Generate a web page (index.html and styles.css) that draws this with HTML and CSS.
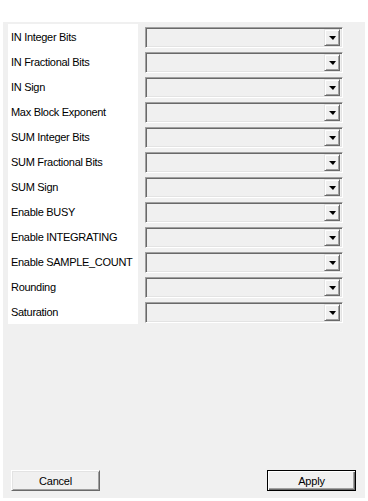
FILE: index.html
```html
<!DOCTYPE html>
<html>
<head>
<meta charset="utf-8">
<link rel="stylesheet" href="styles.css">
</head>
<body>
<div class="dialog">
  <div class="form">
    <div class="row"><div class="label">IN Integer Bits</div><div class="combo"><span class="arrow"></span></div></div>
    <div class="row"><div class="label">IN Fractional Bits</div><div class="combo"><span class="arrow"></span></div></div>
    <div class="row"><div class="label">IN Sign</div><div class="combo"><span class="arrow"></span></div></div>
    <div class="row"><div class="label">Max Block Exponent</div><div class="combo"><span class="arrow"></span></div></div>
    <div class="row"><div class="label">SUM Integer Bits</div><div class="combo"><span class="arrow"></span></div></div>
    <div class="row"><div class="label">SUM Fractional Bits</div><div class="combo"><span class="arrow"></span></div></div>
    <div class="row"><div class="label">SUM Sign</div><div class="combo"><span class="arrow"></span></div></div>
    <div class="row"><div class="label">Enable BUSY</div><div class="combo"><span class="arrow"></span></div></div>
    <div class="row"><div class="label">Enable INTEGRATING</div><div class="combo"><span class="arrow"></span></div></div>
    <div class="row"><div class="label">Enable SAMPLE_COUNT</div><div class="combo"><span class="arrow"></span></div></div>
    <div class="row"><div class="label">Rounding</div><div class="combo"><span class="arrow"></span></div></div>
    <div class="row"><div class="label">Saturation</div><div class="combo"><span class="arrow"></span></div></div>
  </div>
  <div class="buttons">
    <button class="btn">Cancel</button>
    <button class="btn default">Apply</button>
  </div>
</div>
</body>
</html>
```
FILE: styles.css
```css
html, body {
  margin: 0;
  padding: 0;
  background: #ffffff;
}
body {
  font-family: "Liberation Sans", Arial, sans-serif;
  font-size: 11px;
  color: #000;
}
.dialog {
  margin: 22px 3px 0 3px;
  height: 476px;
  background: #f0f0f0;
  display: flex;
  flex-direction: column;
  justify-content: space-between;
}
.form {
  padding: 2px 0 0 5px;
  display: flex;
  flex-direction: column;
}
.row {
  display: flex;
  height: 25px;
}
.label {
  width: 127px;
  padding-left: 3px;
  background: #ffffff;
  line-height: 26px;
  white-space: nowrap;
  overflow: hidden;
  font-size: 11px;
  letter-spacing: -0.3px;
}
.combo {
  margin: 3px 0 0 7px;
  width: 198px;
  height: 21px;
  box-sizing: border-box;
  background: #f0f0f0;
  border-top: 1px solid #a0a0a0;
  border-left: 1px solid #a0a0a0;
  border-right: 1px solid #ffffff;
  border-bottom: 1px solid #ffffff;
  box-shadow: inset 1px 1px 0 #696969, inset -1px -1px 0 #e3e3e3;
  display: flex;
  justify-content: flex-end;
  align-items: center;
  padding-right: 2px;
}
.arrow {
  width: 16px;
  height: 17px;
  box-sizing: border-box;
  background: #f0f0f0;
  border-top: 1px solid #e3e3e3;
  border-left: 1px solid #e3e3e3;
  border-right: 1px solid #696969;
  border-bottom: 1px solid #696969;
  box-shadow: inset 1px 1px 0 #ffffff, inset -1px -1px 0 #a0a0a0;
  display: flex;
  align-items: center;
  justify-content: center;
}
.arrow::before {
  content: "";
  width: 0;
  height: 0;
  border-left: 4px solid transparent;
  border-right: 3px solid transparent;
  border-top: 4px solid #000;
  margin-top: 1px;
}
.buttons {
  display: flex;
  justify-content: space-between;
  padding: 0 9px 7px 8px;
}
.btn {
  width: 89px;
  height: 21px;
  margin: 0;
  padding: 1px 0 0 0;
  box-sizing: border-box;
  background: #f0f0f0;
  font-family: "Liberation Sans", Arial, sans-serif;
  font-size: 11px;
  letter-spacing: -0.2px;
  color: #000;
  border-top: 1px solid #ffffff;
  border-left: 1px solid #ffffff;
  border-right: 1px solid #696969;
  border-bottom: 1px solid #696969;
  box-shadow: inset 1px 1px 0 #e3e3e3, inset -1px -1px 0 #a0a0a0;
}
.btn.default {
  border: 1px solid #000;
  box-shadow: inset 1px 1px 0 #ffffff, inset -1px -1px 0 #696969, inset -2px -2px 0 #a0a0a0;
}
```
